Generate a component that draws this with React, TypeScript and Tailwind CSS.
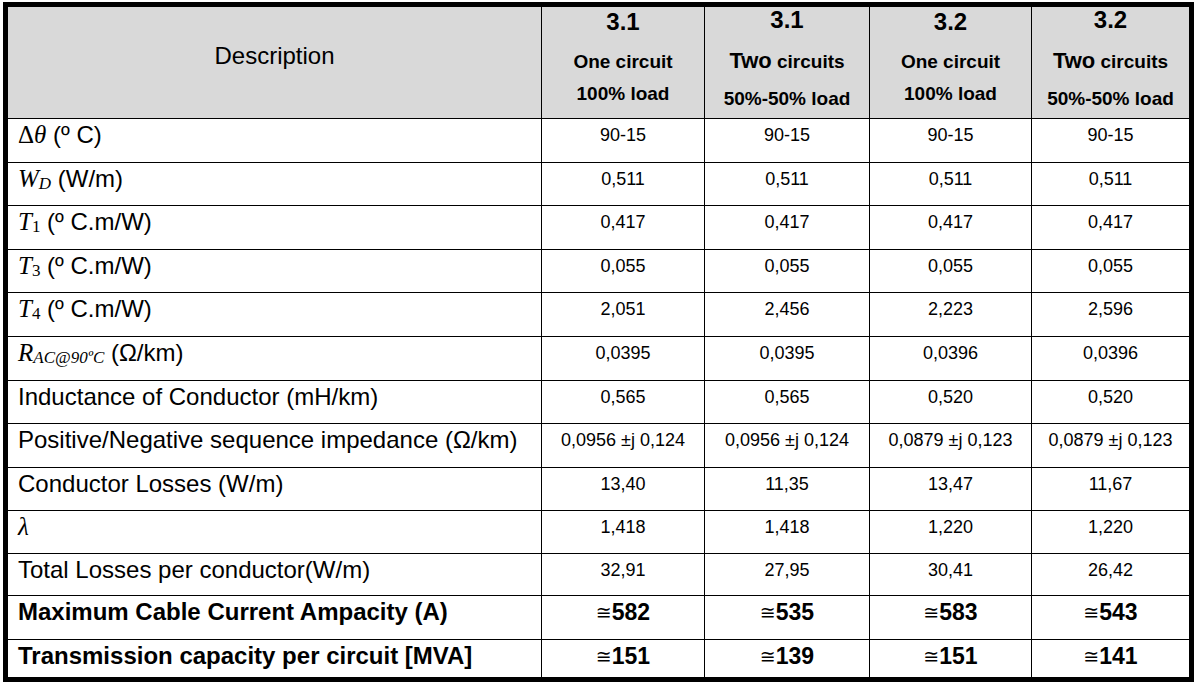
import React from 'react';

type Row = {
    label: React.ReactNode;
    values: string[];
    h: string;
    bold?: boolean;
};

const M = ({ children }: { children: React.ReactNode }) => (
    <span className="italic font-['Liberation_Serif',serif] text-[25px]">{children}</span>
);

const Sub = ({ children, italic }: { children: React.ReactNode; italic?: boolean }) => (
    <sub className={`text-[17px] font-['Liberation_Serif',serif] relative top-[2px] ${italic ? 'italic' : ''}`}>
        {children}
    </sub>
);

const rows: Row[] = [
    { label: <><span className="font-['Liberation_Serif',serif] text-[25px]">Δ</span><M>θ</M> (º C)</>, values: ['90-15', '90-15', '90-15', '90-15'], h: 'h-[43px]' },
    { label: <><M>W</M><Sub italic>D</Sub> (W/m)</>, values: ['0,511', '0,511', '0,511', '0,511'], h: 'h-[42px]' },
    { label: <><M>T</M><Sub>1</Sub> (º C.m/W)</>, values: ['0,417', '0,417', '0,417', '0,417'], h: 'h-[43px]' },
    { label: <><M>T</M><Sub>3</Sub> (º C.m/W)</>, values: ['0,055', '0,055', '0,055', '0,055'], h: 'h-[42px]' },
    { label: <><M>T</M><Sub>4</Sub> (º C.m/W)</>, values: ['2,051', '2,456', '2,223', '2,596'], h: 'h-[43px]' },
    { label: <><M>R</M><Sub italic>AC@90ºC</Sub> (Ω/km)</>, values: ['0,0395', '0,0395', '0,0396', '0,0396'], h: 'h-[43px]' },
    { label: 'Inductance of Conductor (mH/km)', values: ['0,565', '0,565', '0,520', '0,520'], h: 'h-[42px]' },
    { label: 'Positive/Negative sequence impedance (Ω/km)', values: ['0,0956 ±j 0,124', '0,0956 ±j 0,124', '0,0879 ±j 0,123', '0,0879 ±j 0,123'], h: 'h-[43px]' },
    { label: 'Conductor Losses (W/m)', values: ['13,40', '11,35', '13,47', '11,67'], h: 'h-[42px]' },
    { label: <M>λ</M>, values: ['1,418', '1,418', '1,220', '1,220'], h: 'h-[42px]' },
    { label: 'Total Losses per conductor(W/m)', values: ['32,91', '27,95', '30,41', '26,42'], h: 'h-[41px]' },
    { label: 'Maximum Cable Current Ampacity (A)', values: ['582', '535', '583', '543'], h: 'h-[43px]', bold: true },
    { label: 'Transmission capacity per circuit [MVA]', values: ['151', '139', '151', '141'], h: 'h-[37px]', bold: true },
];

const headers = [
    { num: '3.1', two: false },
    { num: '3.1', two: true },
    { num: '3.2', two: false },
    { num: '3.2', two: true },
];

export default function App() {
    return (
        <div className="w-[1196px] h-[685px] bg-white pl-[3px] pt-[2px] font-['Liberation_Sans',Arial,sans-serif] text-black">
            <div className="w-[1191px] border-[5px] border-black bg-black">
                <div className="grid grid-cols-[533px_162px_164px_161px_157px] gap-px">
                    {/* header */}
                    <div className="h-[111px] bg-[#d9d9d9] flex items-center justify-center pb-[14px] text-[24px]">
                        Description
                    </div>
                    {headers.map((c, i) => (
                        <div key={i} className="h-[111px] bg-[#d9d9d9] flex flex-col items-center font-bold">
                            {c.two ? (
                                <>
                                    <div className="text-[24px] leading-[26px]">{c.num}</div>
                                    <div className="text-[19px] leading-[28px] mt-[14px]">
                                        <span className="text-[22px]">Two</span> circuits
                                    </div>
                                    <div className="text-[19px] leading-[28px] mt-[9px]">50%-50% load</div>
                                </>
                            ) : (
                                <>
                                    <div className="text-[24px] leading-[28px] pt-px">{c.num}</div>
                                    <div className="text-[19px] leading-[28px] mt-[12px]">One circuit</div>
                                    <div className="text-[19px] leading-[28px] mt-[4px]">100% load</div>
                                </>
                            )}
                        </div>
                    ))}

                    {rows.map((r, ri) => (
                        <React.Fragment key={ri}>
                            <div className={`${r.h} bg-white pl-[10px] pt-[2px] text-[24px] leading-[28px] whitespace-nowrap ${r.bold ? 'font-bold' : ''}`}>
                                {r.label}
                            </div>
                            {r.values.map((v, vi) => (
                                <div
                                    key={vi}
                                    className={`${r.h} bg-white flex justify-center pt-[2px] leading-[28px] whitespace-nowrap ${r.bold ? 'text-[23px] font-bold' : 'text-[18px]'}`}
                                >
                                    {r.bold ? (
                                        <>
                                            <span className="font-normal text-[19px] font-['DejaVu_Sans',sans-serif]">≅</span>
                                            {v}
                                        </>
                                    ) : (
                                        v
                                    )}
                                </div>
                            ))}
                        </React.Fragment>
                    ))}
                </div>
            </div>
        </div>
    );
}
